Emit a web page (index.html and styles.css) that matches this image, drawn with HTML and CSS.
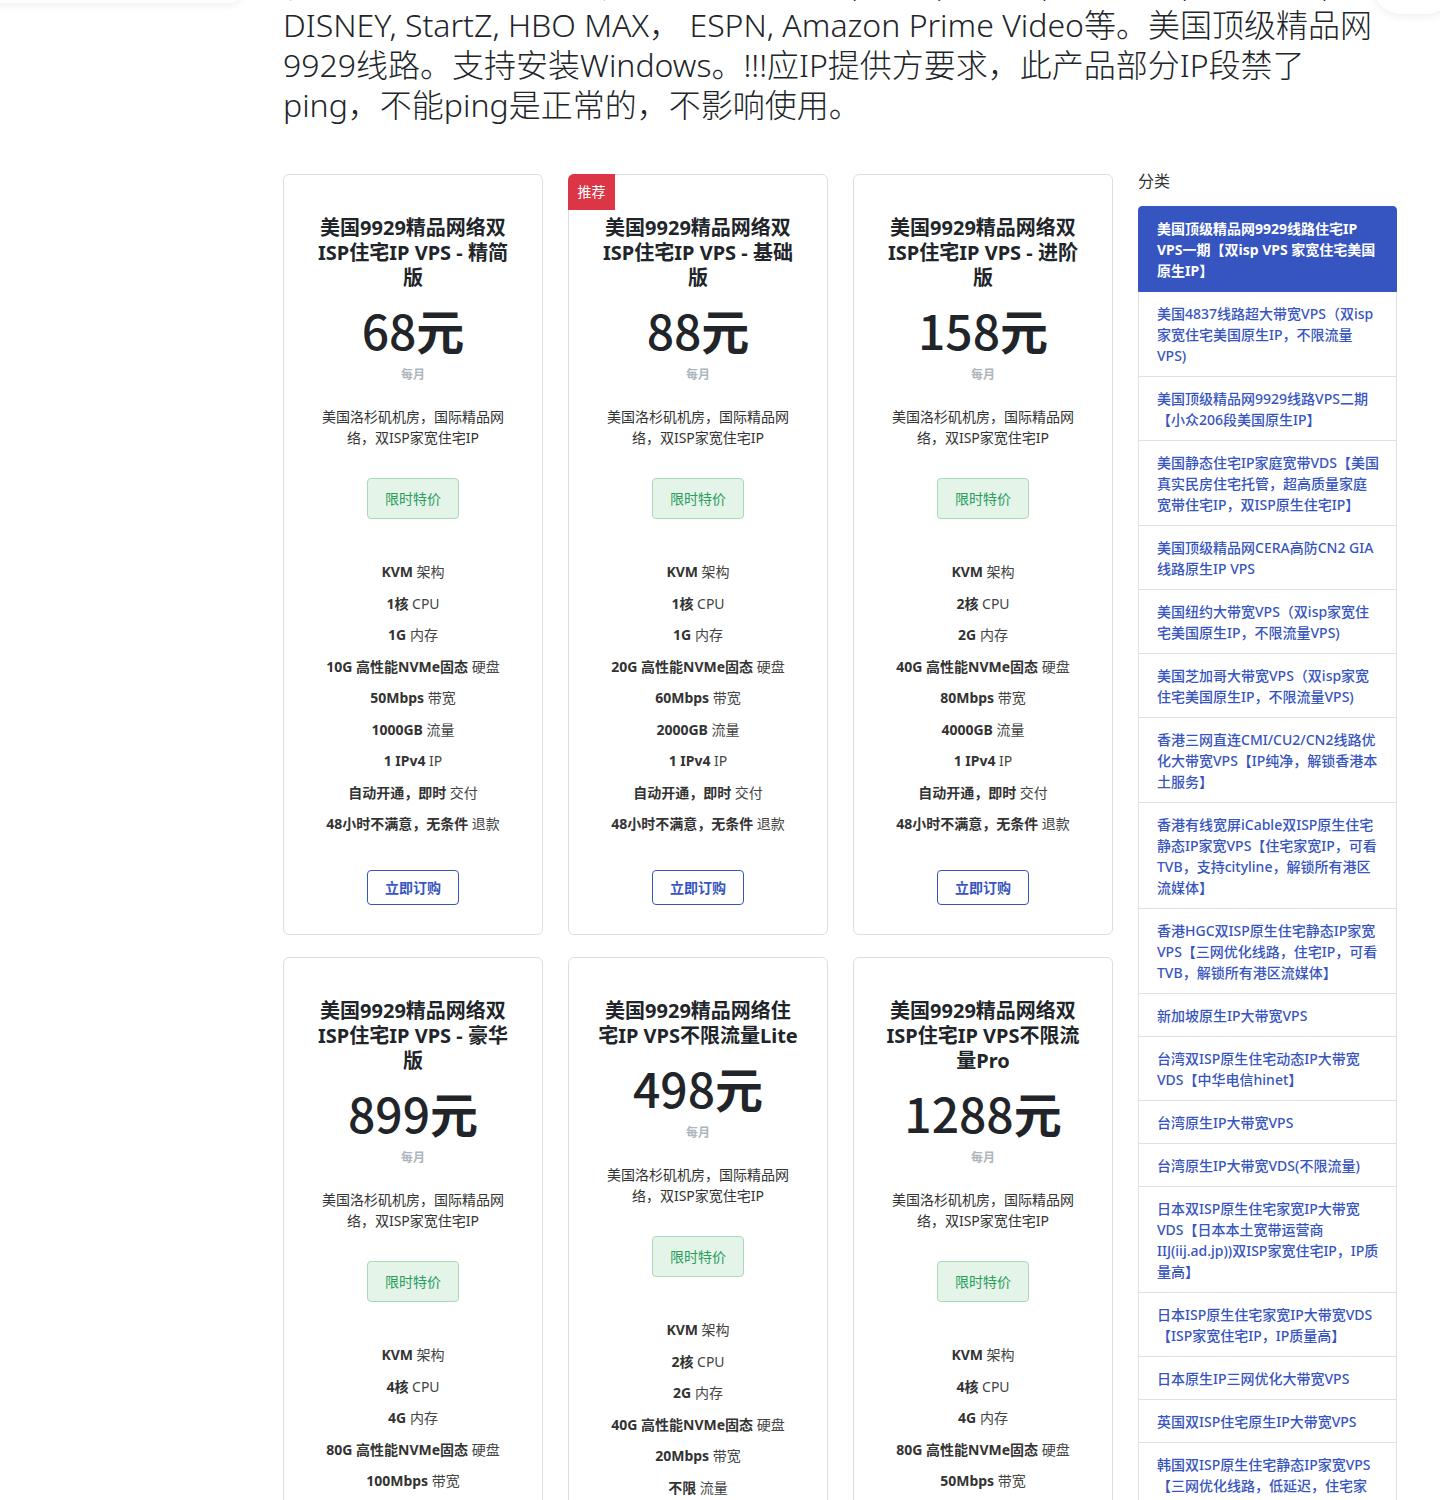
FILE: index.html
```html
<!DOCTYPE html>
<html lang="zh-CN">
<head>
<meta charset="utf-8">
<title>美国顶级精品网9929线路住宅IP VPS</title>
<link rel="stylesheet" href="styles.css">
</head>
<body>
<div class="float-left"></div>
<div class="float-right"></div>
<div class="page">
  <p class="intro">香港、美国原生住宅IP，完美解锁Netflix, Hulu, TikTok, YouTube, ChatGPT,<br>DISNEY, StartZ, HBO MAX， ESPN, Amazon Prime Video等。美国顶级精品网<br>9929线路。支持安装Windows。!!!应IP提供方要求，此产品部分IP段禁了<br>ping，不能ping是正常的，不影响使用。</p>

  <div class="layout">
    <div class="plans">
      <div class="plan">
        <h3 class="plan-title">美国9929精品网络双ISP住宅IP VPS - 精简版</h3>
        <div class="price">68<span class="unit">元</span></div>
        <div class="period">每月</div>
        <p class="desc">美国洛杉矶机房，国际精品网络，双ISP家宽住宅IP</p>
        <span class="tag">限时特价</span>
        <ul class="features">
          <li><b>KVM</b> 架构</li>
          <li><b>1核</b> CPU</li>
          <li><b>1G</b> 内存</li>
          <li><b>10G 高性能NVMe固态</b> 硬盘</li>
          <li><b>50Mbps</b> 带宽</li>
          <li><b>1000GB</b> 流量</li>
          <li><b>1 IPv4</b> IP</li>
          <li><b>自动开通，即时</b> 交付</li>
          <li><b>48小时不满意，无条件</b> 退款</li>
        </ul>
        <a class="order" href="#">立即订购</a>
      </div>

      <div class="plan">
        <span class="badge">推荐</span>
        <h3 class="plan-title">美国9929精品网络双ISP住宅IP VPS - 基础版</h3>
        <div class="price">88<span class="unit">元</span></div>
        <div class="period">每月</div>
        <p class="desc">美国洛杉矶机房，国际精品网络，双ISP家宽住宅IP</p>
        <span class="tag">限时特价</span>
        <ul class="features">
          <li><b>KVM</b> 架构</li>
          <li><b>1核</b> CPU</li>
          <li><b>1G</b> 内存</li>
          <li><b>20G 高性能NVMe固态</b> 硬盘</li>
          <li><b>60Mbps</b> 带宽</li>
          <li><b>2000GB</b> 流量</li>
          <li><b>1 IPv4</b> IP</li>
          <li><b>自动开通，即时</b> 交付</li>
          <li><b>48小时不满意，无条件</b> 退款</li>
        </ul>
        <a class="order" href="#">立即订购</a>
      </div>

      <div class="plan">
        <h3 class="plan-title">美国9929精品网络双ISP住宅IP VPS - 进阶版</h3>
        <div class="price">158<span class="unit">元</span></div>
        <div class="period">每月</div>
        <p class="desc">美国洛杉矶机房，国际精品网络，双ISP家宽住宅IP</p>
        <span class="tag">限时特价</span>
        <ul class="features">
          <li><b>KVM</b> 架构</li>
          <li><b>2核</b> CPU</li>
          <li><b>2G</b> 内存</li>
          <li><b>40G 高性能NVMe固态</b> 硬盘</li>
          <li><b>80Mbps</b> 带宽</li>
          <li><b>4000GB</b> 流量</li>
          <li><b>1 IPv4</b> IP</li>
          <li><b>自动开通，即时</b> 交付</li>
          <li><b>48小时不满意，无条件</b> 退款</li>
        </ul>
        <a class="order" href="#">立即订购</a>
      </div>

      <div class="plan">
        <h3 class="plan-title">美国9929精品网络双ISP住宅IP VPS - 豪华版</h3>
        <div class="price">899<span class="unit">元</span></div>
        <div class="period">每月</div>
        <p class="desc">美国洛杉矶机房，国际精品网络，双ISP家宽住宅IP</p>
        <span class="tag">限时特价</span>
        <ul class="features">
          <li><b>KVM</b> 架构</li>
          <li><b>4核</b> CPU</li>
          <li><b>4G</b> 内存</li>
          <li><b>80G 高性能NVMe固态</b> 硬盘</li>
          <li><b>100Mbps</b> 带宽</li>
          <li><b>8000GB</b> 流量</li>
          <li><b>1 IPv4</b> IP</li>
          <li><b>自动开通，即时</b> 交付</li>
          <li><b>48小时不满意，无条件</b> 退款</li>
        </ul>
        <a class="order" href="#">立即订购</a>
      </div>

      <div class="plan">
        <h3 class="plan-title">美国9929精品网络住宅IP VPS不限流量Lite</h3>
        <div class="price">498<span class="unit">元</span></div>
        <div class="period">每月</div>
        <p class="desc">美国洛杉矶机房，国际精品网络，双ISP家宽住宅IP</p>
        <span class="tag">限时特价</span>
        <ul class="features">
          <li><b>KVM</b> 架构</li>
          <li><b>2核</b> CPU</li>
          <li><b>2G</b> 内存</li>
          <li><b>40G 高性能NVMe固态</b> 硬盘</li>
          <li><b>20Mbps</b> 带宽</li>
          <li><b>不限</b> 流量</li>
          <li><b>1 IPv4</b> IP</li>
          <li><b>自动开通，即时</b> 交付</li>
          <li><b>48小时不满意，无条件</b> 退款</li>
        </ul>
        <a class="order" href="#">立即订购</a>
      </div>

      <div class="plan">
        <h3 class="plan-title">美国9929精品网络双ISP住宅IP VPS不限流量Pro</h3>
        <div class="price">1288<span class="unit">元</span></div>
        <div class="period">每月</div>
        <p class="desc">美国洛杉矶机房，国际精品网络，双ISP家宽住宅IP</p>
        <span class="tag">限时特价</span>
        <ul class="features">
          <li><b>KVM</b> 架构</li>
          <li><b>4核</b> CPU</li>
          <li><b>4G</b> 内存</li>
          <li><b>80G 高性能NVMe固态</b> 硬盘</li>
          <li><b>50Mbps</b> 带宽</li>
          <li><b>不限</b> 流量</li>
          <li><b>1 IPv4</b> IP</li>
          <li><b>自动开通，即时</b> 交付</li>
          <li><b>48小时不满意，无条件</b> 退款</li>
        </ul>
        <a class="order" href="#">立即订购</a>
      </div>
    </div>

    <aside class="sidebar">
      <div class="side-title">分类</div>
      <nav class="cats">
        <a class="cat active" href="#">美国顶级精品网9929线路住宅IP VPS一期【双isp VPS 家宽住宅美国原生IP】</a>
        <a class="cat" href="#">美国4837线路超大带宽VPS（双isp家宽住宅美国原生IP，不限流量VPS)</a>
        <a class="cat" href="#">美国顶级精品网9929线路VPS二期【小众206段美国原生IP】</a>
        <a class="cat" href="#">美国静态住宅IP家庭宽带VDS【美国真实民房住宅托管，超高质量家庭宽带住宅IP，双ISP原生住宅IP】</a>
        <a class="cat" href="#">美国顶级精品网CERA高防CN2 GIA线路原生IP VPS</a>
        <a class="cat" href="#">美国纽约大带宽VPS（双isp家宽住宅美国原生IP，不限流量VPS)</a>
        <a class="cat" href="#">美国芝加哥大带宽VPS（双isp家宽住宅美国原生IP，不限流量VPS)</a>
        <a class="cat" href="#">香港三网直连CMI/CU2/CN2线路优化大带宽VPS【IP纯净，解锁香港本土服务】</a>
        <a class="cat" href="#">香港有线宽屏iCable双ISP原生住宅静态IP家宽VPS【住宅家宽IP，可看TVB，支持cityline，解锁所有港区流媒体】</a>
        <a class="cat" href="#">香港HGC双ISP原生住宅静态IP家宽VPS【三网优化线路，住宅IP，可看TVB，解锁所有港区流媒体】</a>
        <a class="cat" href="#">新加坡原生IP大带宽VPS</a>
        <a class="cat" href="#">台湾双ISP原生住宅动态IP大带宽VDS【中华电信hinet】</a>
        <a class="cat" href="#">台湾原生IP大带宽VPS</a>
        <a class="cat" href="#">台湾原生IP大带宽VDS(不限流量)</a>
        <a class="cat" href="#">日本双ISP原生住宅家宽IP大带宽VDS【日本本土宽带运营商IIJ(iij.ad.jp))双ISP家宽住宅IP，IP质量高】</a>
        <a class="cat" href="#">日本ISP原生住宅家宽IP大带宽VDS【ISP家宽住宅IP，IP质量高】</a>
        <a class="cat" href="#">日本原生IP三网优化大带宽VPS</a>
        <a class="cat" href="#">英国双ISP住宅原生IP大带宽VPS</a>
        <a class="cat" href="#">韩国双ISP原生住宅静态IP家宽VPS【三网优化线路，低延迟，住宅家宽IP】</a>
      </nav>
    </aside>
  </div>
</div>
</body>
</html>
```

FILE: styles.css
```css
* { box-sizing: border-box; }

html, body {
  margin: 0;
  padding: 0;
  background: #ffffff;
}

body {
  font-family: "Noto Sans", "Noto Sans CJK SC", sans-serif;
  color: #212529;
  position: relative;
  overflow: hidden;
}

.float-left {
  position: absolute;
  left: -10px;
  top: -60px;
  width: 250px;
  height: 63px;
  background: #fff;
  border-radius: 0 0 10px 10px;
  box-shadow: 0 2px 8px rgba(0, 0, 0, 0.07);
}

.float-right {
  position: absolute;
  left: 1372px;
  top: -46px;
  width: 84px;
  height: 60px;
  background: #fff;
  border-radius: 40px;
  box-shadow: 0 2px 10px rgba(0, 0, 0, 0.07);
}

.page {
  margin-left: 283px;
  width: 1114px;
}

.intro {
  margin: -35px 0 47px;
  width: 1130px;
  font-size: 32px;
  line-height: 40px;
  font-weight: 300;
  color: #212529;
}

.layout {
  display: flex;
  align-items: flex-start;
  gap: 25px;
}

.plans {
  width: 830px;
  padding-top: 2px;
  display: grid;
  grid-template-columns: repeat(3, 260px);
  column-gap: 25px;
  row-gap: 22px;
}

.plan {
  position: relative;
  display: flex;
  flex-direction: column;
  align-items: center;
  text-align: center;
  border: 1px solid #dedede;
  border-radius: 6px;
  padding: 40px 27px 29px;
  background: #fff;
}

.badge {
  position: absolute;
  left: -1px;
  top: -1px;
  width: 47px;
  height: 36px;
  line-height: 36px;
  background: #dc3545;
  color: #fff;
  font-size: 14px;
  border-radius: 6px 0 0 0;
}

.plan-title {
  margin: 0;
  font-size: 20px;
  line-height: 25px;
  font-weight: 700;
  color: #212529;
}

.price {
  margin-top: 10.5px;
  font-family: "Noto Sans CJK SC", "Noto Sans", sans-serif;
  font-size: 48px;
  line-height: 56px;
  font-weight: 500;
  color: #212529;
}

.price .unit {
  font-weight: 700;
}

.period {
  margin-top: 9px;
  font-size: 12px;
  line-height: 18px;
  font-weight: 700;
  color: #adb5bd;
}

.desc {
  margin: 22px 0 0;
  padding: 0 7px;
  font-size: 14px;
  line-height: 21px;
  color: #333;
}

.tag {
  margin-top: 30.5px;
  display: block;
  padding: 0 17px;
  height: 41px;
  line-height: 39px;
  font-size: 14px;
  color: #2a9d5c;
  background: #e4f4e9;
  border: 1px solid #a9dab7;
  border-radius: 4px;
}

.features {
  list-style: none;
  margin: 37px 0 0;
  padding: 0;
  font-size: 14px;
  line-height: 31.5px;
  color: #444;
}

.features b {
  font-weight: 700;
  color: #333;
}

.order {
  margin-top: 30.5px;
  display: block;
  padding: 0 17px;
  height: 35px;
  line-height: 33px;
  font-size: 14px;
  font-weight: 700;
  color: #3755c0;
  border: 1px solid #3755c0;
  border-radius: 4px;
  text-decoration: none;
}

.sidebar {
  width: 259px;
  flex: none;
}

.side-title {
  font-size: 16px;
  line-height: 18px;
  color: #333;
  margin-bottom: 16px;
}

.cats {
  display: flex;
  flex-direction: column;
}

.cat {
  display: block;
  padding: 10.5px 15.5px 10.5px 18px;
  font-size: 14px;
  line-height: 21px;
  font-weight: 500;
  color: #3755c0;
  text-decoration: none;
  border: 1px solid #dee2e6;
  border-top: none;
}

.cat:first-child {
  border-top: 1px solid #dee2e6;
  border-radius: 4px 4px 0 0;
}

.cat.active {
  background: #3755c0;
  border-color: #3755c0;
  color: #fff;
  font-weight: 700;
}
```
